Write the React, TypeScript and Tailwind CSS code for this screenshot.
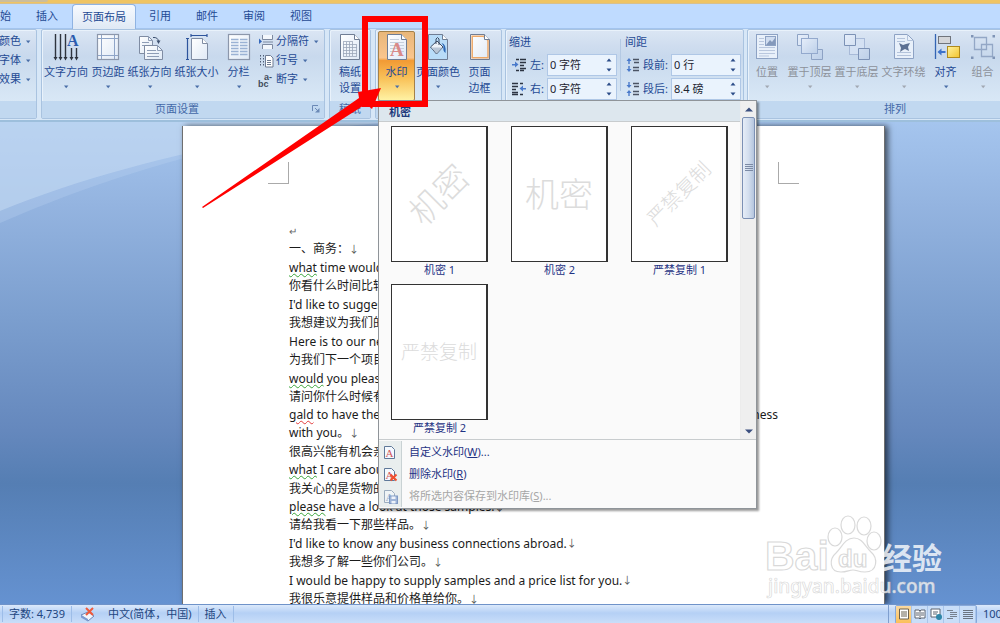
import React from "react";

const NAVY = "text-[#1f4a94]";

type IconProps = { children: React.ReactNode };

function Art({ children }: IconProps) {
  return (
    <svg viewBox="0 0 28 28" className="h-7 w-7 shrink-0" aria-hidden="true">
      <defs>
        <linearGradient id="sheet" x1="0" y1="0" x2="1" y2="1">
          <stop offset="0" stopColor="#ffffff" />
          <stop offset="1" stopColor="#dfe9f6" />
        </linearGradient>
        <linearGradient id="box" x1="0" y1="0" x2="1" y2="1">
          <stop offset="0" stopColor="#e6eefa" />
          <stop offset="1" stopColor="#bccfe8" />
        </linearGradient>
        <linearGradient id="gold" x1="0" y1="0" x2="1" y2="1">
          <stop offset="0" stopColor="#fff3a0" />
          <stop offset="1" stopColor="#f2c42c" />
        </linearGradient>
      </defs>
      {children}
    </svg>
  );
}

function Small({ children }: IconProps) {
  return (
    <svg viewBox="0 0 16 16" className="h-4 w-4 shrink-0" aria-hidden="true">
      {children}
    </svg>
  );
}

function Caret({ off = false }: { off?: boolean }) {
  return (
    <svg viewBox="0 0 6 4" className="h-1 w-1.5 shrink-0" aria-hidden="true">
      <path d="M1 .5h4.4L3.2 3.2z" fill={off ? "#a2a8b2" : "#4a6ea8"} />
    </svg>
  );
}

const sheetPath = "M4.500 1.500H18.500L23.500 6.500V26.500H4.500Z";
const foldPath = "M18.500 1.500V6.500H23.500";

const textDirection = (
  <Art>
    <path d="M3.500 1v24M8.500 1v24M13.500 1v24M19.500 15v10M24.500 15v10" stroke="#2e343e" strokeWidth="1.400" />
    <path d="M1.500 24h4l-2 3.500zM6.500 24h4l-2 3.500zM11.500 24h4l-2 3.500zM17.500 24h4l-2 3.500zM22.500 24h4l-2 3.500z" fill="#2e343e" />
    <text x="15" y="13" fontSize="16" fontWeight="bold" fontFamily="Liberation Serif, serif" fill="#2c5cae">A</text>
  </Art>
);

const margins = (
  <Art>
    <rect x="3.500" y="1.500" width="21" height="25" fill="url(#sheet)" stroke="#8c97ab" strokeWidth="1.200" />
    <path d="M7.500 2v24M20.500 2v24M4 5.500h20M4 22.500h20" stroke="#8fa5c8" />
  </Art>
);

const orientation = (
  <Art>
    <path d="M3.500 3.500h9l4 4v13h-13z" fill="url(#sheet)" stroke="#7f8ca3" />
    <path d="M12.500 3.500v4h4M6 9.500h7M6 12.500h5" fill="none" stroke="#8e9db6" />
    <path d="M8.500 12.500h13l5 5v9h-18z" fill="url(#sheet)" stroke="#7f8ca3" />
    <path d="M21.500 12.500v5h5M11 17.500h9M11 20.500h12M11 23.500h12" fill="none" stroke="#8e9db6" />
    <path d="M17 4.500q5-.5 5.500 4" fill="none" stroke="#3d506f" />
    <path d="M20.500 7.500h4l-2 3.500z" fill="#3d506f" />
  </Art>
);

const paperSize = (
  <Art>
    <path d="M8.500 5.500h11l5 5v16h-16z" fill="url(#sheet)" stroke="#7f8ca3" />
    <path d="M19.500 5.500v5h5" fill="#fff" stroke="#7f8ca3" />
    <path d="M8 2.500h16M8 1v3M24 1v3M4.500 6v20M3 5.500h3M3 26.500h3" stroke="#2d549c" fill="none" strokeWidth="1.200" />
  </Art>
);

const columns = (
  <Art>
    <rect x="3.500" y="1.500" width="21" height="25" fill="url(#sheet)" stroke="#8c97ab" strokeWidth="1.200" />
    <path d="M6 6.500h7.500M6 9.500h7.500M6 12.500h7.500M6 15.500h7.500M6 18.500h7.500M6 21.500h7.500M15 6.500h7.500M15 9.500h7.500M15 12.500h7.500M15 15.500h7.500M15 18.500h7.500M15 21.500h7.500" stroke="#9bb2d4" strokeWidth="1.300" />
  </Art>
);

const manuscript = (
  <Art>
    <path d={sheetPath} fill="url(#sheet)" stroke="#6f7d94" />
    <path d={foldPath} fill="#fff" stroke="#6f7d94" />
    <path d="M7 8.500h10M7 11.500h14M7 14.500h14M7 17.500h14M7 20.500h14M7 23.500h14M7.500 9v14M10.500 9v14M13.500 9v14M16.500 9v14M20.500 12v11" stroke="#9aa6b9" fill="none" strokeWidth=".8" />
  </Art>
);

const watermark = (
  <Art>
    <path d={sheetPath} fill="url(#sheet)" stroke="#6f7d94" />
    <path d={foldPath} fill="#fff" stroke="#6f7d94" />
    <path d="M7 6.500h9M7 9.500h14M7 12.500h14M7 15.500h14M7 18.500h14" stroke="#c6cfdc" />
    <text x="7" y="23" fontSize="19" fontWeight="bold" fontFamily="Liberation Serif, serif" fill="#d98a88">A</text>
  </Art>
);

const pageColor = (
  <Art>
    <path d={sheetPath} fill="#b9dcf8" stroke="#6f7d94" />
    <path d={foldPath} fill="#fff" stroke="#6f7d94" />
    <path d="M6.500 14l6.500-6 6 6-6.500 7z" fill="#eef3f9" stroke="#3c4b63" />
    <path d="M7 14.500h11.500l-6 6z" fill="#b9c6d6" />
    <path d="M12 11V6q1.500-3 3 0v6" fill="none" stroke="#3c4b63" />
    <path d="M17.500 10q5 1 4 10q-3-2-2-7z" fill="#2c67b5" />
  </Art>
);

const pageBorder = (
  <Art>
    <path d={sheetPath} fill="url(#sheet)" stroke="#6f7d94" />
    <path d="M6.200 3.200H17.500L22 7.500V24.800H6.200Z" fill="none" stroke="#eda868" strokeWidth="1.500" />
    <path d={foldPath} fill="#fff" stroke="#6f7d94" />
  </Art>
);

const position = (
  <Art>
    <rect x="3.500" y="1.500" width="21" height="24" fill="#e8f0fa" stroke="#8da2c4" />
    <path d="M6 5.500h5M6 8.500h5M6 11.500h5M6 14.500h16M6 17.500h16M6 20.500h16M6 23h10" stroke="#b9c7de" />
    <rect x="12.500" y="3.500" width="10" height="9" fill="#d0ddf0" stroke="#8da2c4" />
    <path d="M13 12l4-5 2 2 3-4v7z" fill="#8499bb" />
  </Art>
);

const bringFront = (
  <Art>
    <path d="M1.500 1.500h11v11h-11zM15.500 16.500h11v10h-11z" fill="url(#box)" stroke="#8da2c4" />
    <rect x="5.500" y="5.500" width="16" height="15" fill="url(#box)" stroke="#93a9cd" />
  </Art>
);

const sendBack = (
  <Art>
    <rect x="6.500" y="5.500" width="15" height="16" fill="#d4e1f3" stroke="#a8bad8" />
    <path d="M1.500 1.500h11v11h-11zM15.500 15.500h11v11h-11z" fill="url(#box)" stroke="#7c92b6" />
  </Art>
);

const textWrap = (
  <Art>
    <path d="M4.500 1.500H17.500L23.500 7.500V25.500H4.500Z" fill="#e8f0fa" stroke="#8da2c4" />
    <path d="M17.500 1.500v6h6M7 5.500h8M7 8.500h8M7 22.500h14M7 19.500h14" stroke="#b3c3db" fill="none" />
    <path d="M9 10l4 2 3-1 4-1-2 4 1 4-4-2-2 1-3 2 1-4z" fill="#5d7193" />
  </Art>
);

const align = (
  <Art>
    <path d="M3.500 1v25" stroke="#3465b4" strokeWidth="1.300" />
    <rect x="6.500" y="3.500" width="12" height="7" fill="#d4d6da" stroke="#70747c" />
    <rect x="15.500" y="13.500" width="12" height="11" fill="url(#gold)" stroke="#b08a1c" />
    <path d="M5.500 19l4-3.500v2.500h4v2h-4v2.500z" fill="#3c72cb" />
  </Art>
);

const groupIcon = (
  <Art>
    <path d="M5.500 4.500h12v12h-12zM12.500 11.500h11v12h-11z" fill="none" stroke="#93a7c6" strokeWidth="1.300" />
    <path d="M2 2h2.500v2.500H2zM23.500 2H26v2.500h-2.500zM2 23.500h2.500V26H2zM23.500 23.500H26V26h-2.500z" fill="#7f94b6" />
  </Art>
);

type BigProps = {
  icon: React.ReactNode;
  label: string;
  second?: string;
  width: string;
  off?: boolean;
  active?: boolean;
};

function BigButton({ icon, label, second, width, off, active }: BigProps) {
  const tone = off ? "text-[#8c919a]" : NAVY;
  const face = active
    ? "rounded-xs border border-[#a4814a] bg-[linear-gradient(#e9b77a_0%,#fac58d_38%,#f29a34_42%,#f9c45c_70%,#fff2a4_100%)]"
    : "border border-transparent";
  return (
    <button
      type="button"
      disabled={off}
      className={`flex h-[70px] shrink-0 flex-col items-center whitespace-nowrap pt-px text-[11px] leading-4 ${width} ${tone} ${face}`}
    >
      {icon}
      <span className="mt-[3px]">{label}</span>
      {second ? <span>{second}</span> : <span className="mt-[5px] flex"><Caret off={off} /></span>}
    </button>
  );
}

function SmallButton({ icon, label }: { icon?: React.ReactNode; label: string }) {
  return (
    <button type="button" className={`flex h-[19px] items-center gap-0.5 whitespace-nowrap text-[11px] ${NAVY}`}>
      {icon}
      <span className="pr-0.5">{label}</span>
      <Caret />
    </button>
  );
}

function Group({ title, width, launcher, children }: { title: string; width: string; launcher?: boolean; children: React.ReactNode }) {
  return (
    <section
      aria-label={title}
      className={`flex h-[90px] shrink-0 flex-col rounded-xs border border-[#a9c3e0] bg-[linear-gradient(#dbe6f4_0%,#cfddef_18%,#c8d9ed_30%,#d9e8f6_82%)] shadow-[inset_1px_1px_0_#e9f2fb] ${width}`}
    >
      <div className="flex h-[71px] pt-px">{children}</div>
      <div className="flex flex-1 items-center justify-center bg-[#c1d8f0] pb-px text-[11px] leading-4 text-[#4469a8]">
        <span className={launcher ? "flex-1 text-center" : ""}>{title}</span>
        {launcher && (
          <button type="button" aria-label={title} className="mr-1">
            <svg viewBox="0 0 8 8" className="h-2 w-2">
              <path d="M.5 6V.5H6M3 3l3 3" stroke="#6b89b6" fill="none" />
              <path d="M7.500 3v4.500H3z" fill="#6b89b6" />
            </svg>
          </button>
        )}
      </div>
    </section>
  );
}

function Spin({ id, label, value, icon, gap }: { id: string; label: string; value: string; icon: React.ReactNode; gap: string }) {
  return (
    <div className={`flex h-6 items-center text-[11px] ${NAVY} ${gap}`}>
      {icon}
      <label htmlFor={id} className="flex-1 whitespace-nowrap">{label}</label>
      <div className="flex h-[22px] w-[70px] shrink-0 items-center border border-[#afc7e6] bg-[#eaf3fd]">
        <input id={id} defaultValue={value} className="w-12 flex-1 bg-transparent pl-0.5 text-[11px] text-[#1c2430] outline-none" />
        <div className="mr-1 flex flex-col gap-1">
          <button type="button" aria-label={`${label} +`} className="flex h-1.5 items-center">
            <svg viewBox="0 0 6 4" className="h-1 w-1.5"><path d="M.5 3.500h5L3 .5z" fill="#2b4c88" /></svg>
          </button>
          <button type="button" aria-label={`${label} -`} className="flex h-1.5 items-center">
            <svg viewBox="0 0 6 4" className="h-1 w-1.5"><path d="M.5 .5h5L3 3.500z" fill="#2b4c88" /></svg>
          </button>
        </div>
      </div>
    </div>
  );
}

const indentLeft = (
  <Small>
    <path d="M5 2.500h3M9 2.500h6M9 5.500h6M9 8.500h4M9 11.500h6M5 13.500h3M9 13.500h4" stroke="#2c3442" strokeWidth="1.300" />
    <path d="M1 7h3V4.500L7.500 7.500 4 10.500V8.500H1z" fill="#4a7acb" />
  </Small>
);
const indentRight = (
  <Small>
    <path d="M1 2.500h6M1 5.500h6M1 8.500h4M1 11.500h6M1 13.500h6M9 2.500h3M9 13.500h3" stroke="#2c3442" strokeWidth="1.300" />
    <path d="M15 7h-3V4.500L8.500 7.500 12 10.500V8.500h3z" fill="#4a7acb" />
  </Small>
);
const spaceBefore = (
  <Small>
    <path d="M8 2.500h6M9 5.500h5M8 10.500h6M8 13.500h6" stroke="#4b5464" strokeWidth="1.300" />
    <path d="M4 1L6.500 4H4.700v3H3.300V4H1.500zM4 15L6.500 12H4.700V9H3.300v3H1.500z" fill="#4a7acb" />
  </Small>
);
const spaceAfter = (
  <Small>
    <path d="M8 2.500h6M9 5.500h5M8 10.500h6M8 13.500h6" stroke="#4b5464" strokeWidth="1.300" />
    <path d="M4 7L6.500 4H4.700V1H3.300v3H1.500zM4 9l2.500 3H4.700v3H3.300v-3H1.500z" fill="#4a7acb" />
  </Small>
);
const breaks = (
  <Small>
    <path d="M4.500 1v4.500h10V1M4.500 15v-4.500h10V15" fill="#f3f7fc" stroke="#7d8aa1" />
    <path d="M5 8h10" stroke="#7d8aa1" />
    <path d="M1 4.500L4 7.500 1 10z" fill="#3567bb" />
  </Small>
);
const lineNumbers = (
  <Small>
    <path d="M2.500 2v12M5.500 2v12" stroke="#4f5c74" strokeDasharray="1.500 1.500" />
    <path d="M7.500 2.500h5l2.500 2.500v9h-7.500z" fill="#fff" stroke="#6f7d94" />
    <path d="M9 7.500h4M9 9.500h4M9 11.500h4" stroke="#6f7d94" />
  </Small>
);
const hyphen = (
  <Small>
    <g fontFamily="Liberation Sans, sans-serif" fontWeight="bold" fill="#414b5c">
      <text x="0" y="15" fontSize="9">bc</text>
      <text x="6" y="8" fontSize="9">a-</text>
    </g>
  </Small>
);

function Thumb({ text, caption, style }: { text: string; caption: string; style: string }) {
  return (
    <button type="button" className="flex w-[97px] flex-col text-[11px] text-[#1f3384]">
      <span className="flex h-[136px] w-full items-center justify-center border border-r-2 border-[#333] bg-white">
        <span className={`whitespace-nowrap font-light ${style}`}>{text}</span>
      </span>
      <span className="w-full text-center leading-4">{caption}</span>
    </button>
  );
}

function MenuRow({ icon, text, hot, more, off }: { icon: React.ReactNode; text: string; hot: string; more?: string; off?: boolean }) {
  return (
    <button type="button" disabled={off} className={`flex h-[22px] w-full items-center text-[11px] ${off ? "text-[#a6a6a6]" : "text-[#1f3384]"}`}>
      <span className="flex h-full w-[23px] items-center border-r border-[#c9d2d4] bg-[#e9eeee] pl-[3px]">{icon}</span>
      <span className="pl-[7px]">{text}(<u>{hot}</u>){more}</span>
    </button>
  );
}

function MiniDoc({ faded }: { faded?: boolean }) {
  return (
    <g opacity={faded ? 0.55 : 1}>
      <path d="M2.500 2.500h7l3 3v9h-10z" fill="#f5f9fe" stroke="#5f7899" />
      <text x="3.500" y="13" fontSize="11" fontFamily="Liberation Serif, serif" fill={faded ? "#5d7fb2" : "#d2575a"}>A</text>
    </g>
  );
}

function WatermarkMenu() {
  return (
    <div className="absolute left-[3px] top-[71px] z-20 w-[379px] border border-[#8f9499] bg-[#fafafa] shadow-[2px_2px_2px_#00000066]">
      <div className="flex h-[339px] border-b border-[#c8ccce]">
        <div className="flex-1 border-r border-[#ececec]">
          <h3 className="h-[21px] border-b border-[#c8ccce] bg-[#dde7ee] pl-2.5 text-[11px] font-bold leading-[22px] text-[#1f3a7c]">机密</h3>
          <div className="grid grid-cols-3 gap-x-[23px] gap-y-1.5 pl-3 pr-3 pt-1">
            <Thumb text="机密" caption="机密 1" style="-rotate-45 text-[34px] text-[#dcdcdc]" />
            <Thumb text="机密" caption="机密 2" style="text-[34px] text-[#dcdcdc]" />
            <Thumb text="严禁复制" caption="严禁复制 1" style="-rotate-45 text-[20px] text-[#dcdcdc]" />
            <Thumb text="严禁复制" caption="严禁复制 2" style="text-[19px] text-[#dcdcdc]" />
          </div>
        </div>
        <div className="flex w-[15px] flex-col items-center bg-[#efefef]">
          <button type="button" aria-label="向上" className="flex h-4 items-center">
            <svg viewBox="0 0 8 5" className="h-[5px] w-2"><path d="M0 4.500h8L4 .5z" fill="#3b4f7f" /></svg>
          </button>
          <div className="flex h-[102px] w-[13px] items-center justify-center rounded-xs border border-[#7c90b4] bg-[linear-gradient(90deg,#e6edf7,#d3deee_50%,#b4c5de)]">
            <svg viewBox="0 0 8 8" className="h-2 w-2"><path d="M0 .5h8M0 2.500h8M0 4.500h8M0 6.500h8" stroke="#7b8aa5" /></svg>
          </div>
          <span className="flex-1" />
          <button type="button" aria-label="向下" className="flex h-4 items-center">
            <svg viewBox="0 0 8 5" className="h-[5px] w-2"><path d="M0 .5h8L4 4.500z" fill="#3b4f7f" /></svg>
          </button>
        </div>
      </div>
      <div className="py-px">
        <MenuRow icon={<Small><MiniDoc /></Small>} text="自定义水印" hot="W" more="..." />
        <MenuRow
          icon={<Small><MiniDoc /><path d="M8.500 8.500l6 6M14.500 8.500l-6 6" stroke="#f05030" strokeWidth="2" /></Small>}
          text="删除水印"
          hot="R"
        />
        <MenuRow
          icon={<Small><MiniDoc faded /><rect x="7.500" y="8" width="8" height="7.500" fill="#9fb5d8" stroke="#7f99c4" /><path d="M9.500 8.500h4v2.500h-4zM9.500 13h4v2.500h-4z" fill="#eef3fa" /></Small>}
          text="将所选内容保存到水印库"
          hot="S"
          more="..."
          off
        />
      </div>
    </div>
  );
}

type Line = { flag?: string; bad?: boolean; text: string; end?: string; kind: "zh" | "en" };

const lines: Line[] = [
  { kind: "zh", text: "一、商务：", end: "↓" },
  { kind: "en", flag: "what", text: " time would" },
  { kind: "zh", text: "你看什么时间比较" },
  { kind: "en", text: "I'd like to suggest" },
  { kind: "zh", text: "我想建议为我们的" },
  { kind: "en", text: "Here is to our next" },
  { kind: "zh", text: "为我们下一个项目" },
  { kind: "en", flag: "would", text: " you please" },
  { kind: "zh", text: "请问你什么时候有" },
  { kind: "zh", flag: "gald", bad: true, text: " to have the", end: "business" },
  { kind: "zh", text: "with you。", end: "↓" },
  { kind: "en", text: "很高兴能有机会亲" },
  { kind: "zh", flag: "what", text: " I care about" },
  { kind: "en", text: "我关心的是货物的" },
  { kind: "zh", flag: "please", text: " have a look at those samples.", end: "↓" },
  { kind: "zh", text: "请给我看一下那些样品。", end: "↓" },
  { kind: "en", text: "I'd like to know any business connections abroad.", end: "↓" },
  { kind: "zh", text: "我想多了解一些你们公司。", end: "↓" },
  { kind: "en", text: "I would be happy to supply samples and a price list for you.", end: "↓" },
  { kind: "zh", text: "我很乐意提供样品和价格单给你。", end: "↓" },
];

function DocLine({ line }: { line: Line }) {
  const wide = line.end === "business";
  return (
    <p className={`flex whitespace-pre ${line.kind === "zh" ? "h-[18px] leading-[18px]" : "h-[19px] leading-[19px]"} ${wide ? "justify-between" : ""}`}>
      <span>
        {line.flag && (
          <span className={`underline decoration-wavy decoration-1 underline-offset-1 ${line.bad ? "decoration-[#e23b3b]" : "decoration-[#3aa53a]"}`}>{line.flag}</span>
        )}
        {line.text}
      </span>
      {line.end && <span className={wide ? "" : "text-[10px] text-[#555]"}>{line.end}</span>}
    </p>
  );
}

function BaiduMark() {
  return (
    <svg viewBox="0 0 200 90" className="absolute bottom-0.5 right-[50px] z-10 h-[90px] w-[200px]" aria-hidden="true">
      <g fill="#ffffff" fillOpacity=".75" stroke="#cfcfcf" strokeWidth="1.200" strokeOpacity=".8">
        <text x="15" y="58" fontSize="41" fontWeight="bold" fontFamily="Liberation Sans, sans-serif">Bai</text>
        <ellipse cx="85" cy="25" rx="7" ry="9" />
        <ellipse cx="98" cy="13" rx="7" ry="9" />
        <ellipse cx="114" cy="14" rx="7" ry="9" />
        <ellipse cx="124" cy="29" rx="7" ry="9" />
        <path d="M104 26C112 26 115 34 121 40C128 46 128 60 115 60C108 60 107 58 103 58C99 58 97 60 91 60C79 60 79 47 86 41C92 35 95 26 104 26Z" />
        <text x="88" y="55" fontSize="24" fontWeight="bold" fontFamily="Liberation Sans, sans-serif">du</text>
        <text x="132" y="57" fontSize="30" fontWeight="bold" fontFamily="Noto Sans CJK SC, sans-serif" stroke="none" fillOpacity=".8">经验</text>
        <text x="18" y="81" fontSize="19" fontWeight="500" fontFamily="Noto Sans, sans-serif" strokeWidth=".7">jingyan.baidu.com</text>
      </g>
    </svg>
  );
}

function ViewButton({ label, on, children }: { label: string; on?: boolean; children: React.ReactNode }) {
  return (
    <button
      type="button"
      aria-label={label}
      className={`flex h-[17px] w-4 items-center justify-center border-r border-[#a9c5ea] ${on ? "bg-[linear-gradient(#fbd9a0,#fbc05a)]" : "bg-[#c9def8]"}`}
    >
      <svg viewBox="0 0 12 12" className="h-3 w-3">{children}</svg>
    </button>
  );
}

const tabs = ["开始", "插入", "页面布局", "引用", "邮件", "审阅", "视图"];

export default function App() {
  return (
    <div className="relative flex h-screen flex-col overflow-hidden bg-[#bfdbff] font-['Noto_Sans','Noto_Sans_CJK_SC',sans-serif]">
      <div className="h-1 shrink-0 border-b border-[#d9c08c] bg-[#efc463]">
        <div className="h-0.5 w-12 rounded-br-md bg-[#cbbd9c]" />
      </div>

      <nav className="-ml-[23px] flex h-6 shrink-0 items-end gap-px">
        {tabs.map((t) =>
          t === "页面布局" ? (
            <button key={t} type="button" className={`relative z-20 ml-px h-[25px] rounded-t border border-b-0 border-[#8fb3e2] bg-[linear-gradient(#f7fafe,#dfe9f5)] px-[9px] text-[11px] -mb-px ${NAVY}`}>{t}</button>
          ) : (
            <button key={t} type="button" className={`h-6 px-3 text-[11px] ${NAVY}`}>{t}</button>
          )
        )}
      </nav>

      <div className="relative z-10 flex h-[94px] shrink-0 gap-1 border-b-2 border-t border-b-[#9dbfdc] border-t-[#a3c4ee] bg-[#d7e7f7]">
        <Group title="" width="-ml-1 w-[41px]">
          <div className="flex flex-col pl-0.5 pt-px">
            <SmallButton label="颜色" />
            <SmallButton label="字体" />
            <SmallButton label="效果" />
          </div>
        </Group>

        <Group title="页面设置" width="w-[284px]" launcher>
          <BigButton icon={textDirection} label="文字方向" width="w-[48px]" />
          <BigButton icon={margins} label="页边距" width="w-[36px]" />
          <BigButton icon={orientation} label="纸张方向" width="w-[47px]" />
          <BigButton icon={paperSize} label="纸张大小" width="w-[47px]" />
          <BigButton icon={columns} label="分栏" width="mr-px w-[37px]" />
          <div className="flex flex-col pt-px">
            <SmallButton icon={breaks} label="分隔符" />
            <SmallButton icon={lineNumbers} label="行号" />
            <SmallButton icon={hyphen} label="断字" />
          </div>
        </Group>

        <Group title="稿纸" width="w-[42px]">
          <BigButton icon={manuscript} label="稿纸" second="设置" width="w-10" />
        </Group>

        <div className="relative">
          <Group title="页面背景" width="w-[127px]">
            <BigButton icon={watermark} label="水印" width="ml-0.5 w-[37px]" active />
            <BigButton icon={pageColor} label="页面颜色" width="w-[46px]" />
            <BigButton icon={pageBorder} label="页面" second="边框" width="w-[37px]" />
          </Group>
          <WatermarkMenu />
        </div>

        <Group title="段落" width="-ml-px w-[239px]">
          <div className="flex w-full gap-1 pl-[3px] pr-0.5">
            <div className={`flex w-[107px] flex-col ${NAVY}`}>
              <span className="h-[22px] text-[11px] leading-[22px]">缩进</span>
              <Spin id="left" label="左:" value="0 字符" icon={indentLeft} gap="gap-[3px] pl-0.5" />
              <Spin id="right" label="右:" value="0 字符" icon={indentRight} gap="gap-[3px] pl-0.5" />
            </div>
            <div className="mt-2 h-[52px] w-px bg-[#b4c9e3]" />
            <div className={`flex flex-1 flex-col ${NAVY}`}>
              <span className="h-[22px] text-[11px] leading-[22px]">间距</span>
              <Spin id="before" label="段前:" value="0 行" icon={spaceBefore} gap="gap-0.5" />
              <Spin id="after" label="段后:" value="8.4 磅" icon={spaceAfter} gap="gap-0.5" />
            </div>
          </div>
        </Group>

        <Group title="排列" width="-ml-px w-[296px]">
          <BigButton icon={position} label="位置" width="w-[38px]" off />
          <BigButton icon={bringFront} label="置于顶层" width="w-[47px]" off />
          <BigButton icon={sendBack} label="置于底层" width="w-[47px]" off />
          <BigButton icon={textWrap} label="文字环绕" width="w-[47px]" off />
          <BigButton icon={align} label="对齐" width="w-[37px]" />
          <BigButton icon={groupIcon} label="组合" width="w-[37px]" off />
        </Group>
      </div>

      <main className="relative flex min-h-0 flex-1 bg-[linear-gradient(#a5c5ee_0%,#94b4e0_17%,#7c9fcf_40%,#6588bd_64%,#557eb3_75%,#6592d1_100%)] pl-[182px] pr-[115px] pt-1">
        <svg viewBox="0 0 400 104" className="absolute left-0 top-0 h-[104px] w-[400px]" aria-hidden="true">
          <path d="M0 0H400C300 4 150 35 0 101Z" fill="#bcd5f2" fillOpacity=".3" />
          <path d="M0 0H400C300 4 130 36 0 89Z" fill="#c4dbf3" fillOpacity=".55" />
        </svg>
        <article className="relative flex-1 overflow-hidden border-x border-[#6f6f6f] bg-white shadow-[3px_0_6px_#00000099]">
          <div className="flex justify-between px-[85px] pt-9">
            <span className="h-[22px] w-[21px] border-b border-r border-[#aaa]" />
            <span className="h-[22px] w-[21px] border-b border-l border-[#aaa]" />
          </div>
          <div className="px-[106px] pt-[38px] text-xs text-[#1b1b1b]">
            <p className="h-[18px] text-[10px] leading-[18px] text-[#666]">↵</p>
            {lines.map((l) => (
              <DocLine key={l.text} line={l} />
            ))}
          </div>
        </article>
        <BaiduMark />
      </main>

      <footer className="relative z-10 flex h-[19px] shrink-0 items-center whitespace-nowrap border-t border-[#6f93c9] bg-[linear-gradient(#dbe9fb,#b5d0f5_45%,#c9def9)] text-[11px] text-[#23467f]">
        <span className="ml-0.5 border-l border-[#9dbde8] px-1.5">字数: 4,739</span>
        <span className="flex items-center gap-3 border-x border-[#9dbde8] pl-2 pr-1.5">
          <Small>
            <path d="M1 9l7-3 6 4-6 5z" fill="#f2f6fc" stroke="#6a86b8" />
            <path d="M1 9v2.500l7 4V13z" fill="#7c9cd2" />
            <path d="M6 2l7 7M13 2L6 9" stroke="#ef5a3c" strokeWidth="2" />
          </Small>
          <span>中文(简体，中国)</span>
        </span>
        <span className="border-r border-[#9dbde8] px-1.5">插入</span>
        <span className="flex-1" />
        <div className="flex items-center border-l border-[#7f9fcf] pl-1.5">
          <div className="flex rounded-xs border border-[#86a8da]">
            <ViewButton label="页面视图" on><path d="M1.500 1h9v10h-9z" fill="#fff" stroke="#6b6250" /><path d="M3 4h6M3 6h6M3 8h6" stroke="#6b6250" /></ViewButton>
            <ViewButton label="阅读版式"><path d="M1 2h4l1 1 1-1h4v8H7l-1 1-1-1H1z" fill="#fff" stroke="#5d6470" /><path d="M6 3v8M2 5h3M2 7h3M7 5h3M7 7h3" stroke="#5d6470" /></ViewButton>
            <ViewButton label="Web 版式"><path d="M1 1h9v8H1z" fill="#fff" stroke="#5d6470" /><path d="M3 4h5M3 6h4" stroke="#5d6470" /><circle cx="9" cy="9" r="3" fill="#2f86a8" /></ViewButton>
            <ViewButton label="大纲视图"><path d="M1 2.500h6M4 4.500h7M4 6.500h7M4 8.500h7M1 10.500h6" stroke="#77808e" /></ViewButton>
            <ViewButton label="普通视图"><path d="M1 2.500h10M1 4.500h10M1 6.500h10M1 8.500h10M1 10.500h10" stroke="#6a7380" /></ViewButton>
          </div>
          <button type="button" className="w-[23px] overflow-hidden pl-1.5 text-left">100%</button>
        </div>
      </footer>

      <svg viewBox="0 0 240 210" className="pointer-events-none absolute left-[200px] top-0 z-30 h-[210px] w-[240px]" aria-hidden="true">
        <rect x="165" y="19" width="60" height="85" fill="none" stroke="#ff0000" strokeWidth="6" />
        <path d="M2 207L159 98L158 92L181 88L172 109L166 104L3 208Z" fill="#ff0000" />
      </svg>
    </div>
  );
}
